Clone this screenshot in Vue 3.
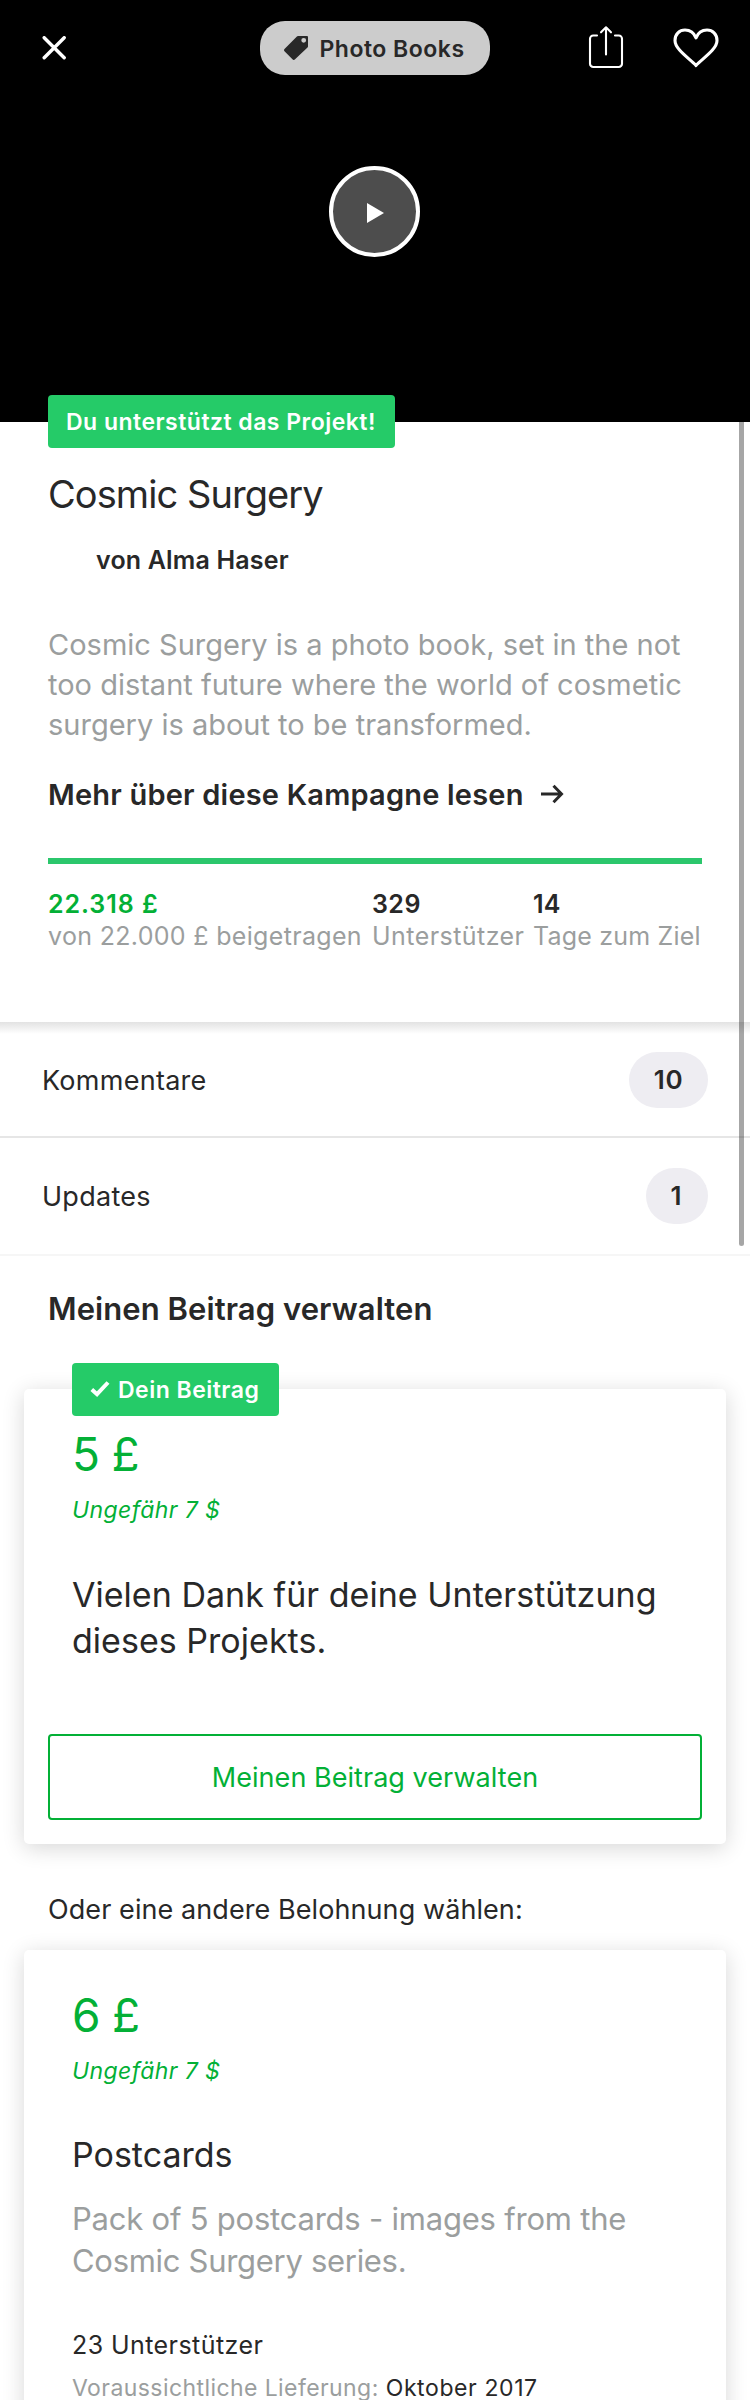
<script setup>
const stats = [
  { value: '22.318 £', label: 'von 22.000 £ beigetragen', cls: 'raised' },
  { value: '329', label: 'Unterstützer', cls: 'backers' },
  { value: '14', label: 'Tage zum Ziel', cls: 'days' },
]
</script>

<template>
  <div class="screen">
    <header class="hero">
      <div class="topbar">
        <svg class="close" width="24" height="24" viewBox="0 0 24 24"><path d="M2.200 1.700 22.200 21.700M22.200 1.700 2.200 21.700" /></svg>
        <div class="category">
          <svg width="24" height="24" viewBox="0 0 24 24">
            <path fill="#282828" fill-rule="evenodd" d="M14 0H23a1 1 0 0 1 1 1v9.500a1.500 1.500 0 0 1-.5 1.100L10.800 23.500a1.500 1.500 0 0 1-2.100 0L.5 15.200a1.500 1.500 0 0 1 0-2.100L12.900.5A1.500 1.500 0 0 1 14 0ZM19.700 1.900a2.400 2.400 0 1 0 0 4.800 2.400 2.400 0 0 0 0-4.800Z" />
          </svg>
          <span class="t-cat">Photo Books</span>
        </div>
        <svg class="share" width="36" height="44" viewBox="0 0 36 44"><path d="M9 10.500H5.200A3.200 3.200 0 0 0 2 13.700V38.800A3.200 3.200 0 0 0 5.200 42H30.800A3.200 3.200 0 0 0 34 38.800V13.700A3.200 3.200 0 0 0 30.800 10.500H27M18 29.500V2.500M13 7.300 18 2.300 23 7.300" /></svg>
        <svg class="heart" width="46" height="40" viewBox="0 0 46 40"><path d="M23 37.500C16.500 30.500 2 21.500 2 12.500 2 6 6.500 2 12 2 17 2 21 4.800 23 9.800 25 4.800 29 2 34 2 39.500 2 44 6 44 12.500 44 21.500 29.500 30.500 23 37.500Z" /></svg>
      </div>
      <div class="play"><svg width="18" height="20" viewBox="0 0 18 20"><path fill="#fff" d="M0 0 17 10 0 20Z" /></svg></div>
    </header>

    <section class="intro">
      <div class="ribbon"><span class="t-ribbon">Du unterstützt das Projekt!</span></div>
      <h1>Cosmic Surgery</h1>
      <div class="author"><span class="t-author">von Alma Haser</span></div>
      <p class="blurb">
        <span>Cosmic Surgery is a photo book, set in the not</span>
        <span>too distant future where the world of cosmetic</span>
        <span>surgery is about to be transformed.</span>
      </p>
      <div class="more">
        <span class="t-more">Mehr über diese Kampagne lesen</span>
        <svg width="24" height="20" viewBox="0 0 24 20"><path d="M1 10H21M13.500 1.800 21.500 10 13.500 18.200" /></svg>
      </div>
      <div class="bar"></div>
      <div class="stats">
        <div v-for="s in stats" :key="s.label" :class="['stat', s.cls]">
          <b>{{ s.value }}</b><span>{{ s.label }}</span>
        </div>
      </div>
    </section>

    <nav>
      <div class="row first"><span>Kommentare</span><b class="count ten">10</b></div>
      <div class="row second"><span>Updates</span><b class="count">1</b></div>
    </nav>

    <h2>Meinen Beitrag verwalten</h2>
    <article class="card pledge">
      <div class="ribbon mine">
        <svg width="20" height="16" viewBox="0 0 20 16"><path d="M1.800 8.500 7 13.200 18 1.500" /></svg>
        <span class="t-mine">Dein Beitrag</span>
      </div>
      <div class="price">5 £</div>
      <div class="approx">Ungefähr 7 $</div>
      <h3><span>Vielen Dank für deine Unterstützung</span><span>dieses Projekts.</span></h3>
      <button><span>Meinen Beitrag verwalten</span></button>
    </article>

    <div class="other"><span>Oder eine andere Belohnung wählen:</span></div>
    <article class="card reward">
      <div class="price">6 £</div>
      <div class="approx">Ungefähr 7 $</div>
      <h3><span>Postcards</span></h3>
      <p class="desc"><span>Pack of 5 postcards - images from the</span><span>Cosmic Surgery series.</span></p>
      <div class="backed">23 Unterstützer</div>
      <div class="delivery"><span class="when">Voraussichtliche Lieferung:</span><span class="month">Oktober 2017</span></div>
    </article>
    <div class="scrollbar"></div>
  </div>
</template>

<style>
body { margin: 0; background: #fff; }
</style>

<style scoped>
* { box-sizing: border-box; }
.screen { position: relative; width: 750px; height: 2400px; overflow: hidden; background: #fff; color: #282828; font-family: Inter, "Liberation Sans", sans-serif; white-space: nowrap; }
svg { display: block; flex: none; }
h1, h2, h3, p { margin: 0; font-weight: 400; }
b { font-weight: 600; }
.hero { height: 422px; background: #000; display: flex; flex-direction: column; align-items: center; }
.topbar { width: 750px; height: 96px; display: flex; align-items: center; padding-left: 42px; }
.topbar > svg path { fill: none; stroke: #fff; stroke-linecap: round; stroke-linejoin: round; }
.close path { stroke-width: 3.4; }
.category { width: 230px; height: 54px; margin-left: 194px; background: #ccc; border-radius: 25px; display: flex; align-items: center; padding-left: 24px; }
.t-cat { margin-left: 11.5px; padding-top: 1px; font-size: 23px; font-weight: 600; letter-spacing: .5px; }
.share { margin-left: 98px; margin-top: -2px; }
.share path { stroke-width: 2.1; }
.heart { margin-left: 49px; margin-top: -1px; }
.heart path { stroke-width: 3.1; }
.play { width: 91px; height: 91px; margin: 70px 1px 0 0; border: 4px solid #fff; border-radius: 50%; background: #4d4d4d; display: flex; align-items: center; justify-content: center; padding: 3px 0 0 3px; }
.intro { height: 600px; padding: 0 48px; display: flow-root; }
.ribbon { height: 53px; width: 347px; background: #25cb68; border-radius: 4px; color: #fff; display: flex; align-items: center; padding-left: 18px; font-size: 23px; font-weight: 600; margin-top: -27px; position: relative; }
.t-ribbon { letter-spacing: .48px; }
h1 { font-size: 38px; line-height: 60px; margin-top: 16px; letter-spacing: -.93px; }
.author { padding-left: 48px; margin-top: 20px; font-size: 25px; line-height: 32px; font-weight: 600; letter-spacing: .17px; }
.blurb { margin-top: 49px; font-size: 29px; line-height: 40px; color: #9b9e9e; }
.blurb span, h3 span, .desc span { display: block; width: max-content; }
.more { margin-top: 29px; display: flex; align-items: center; height: 40px; font-size: 29px; font-weight: 600; letter-spacing: .2px; }
.more svg { margin-left: 16px; }
.more path { fill: none; stroke: #282828; stroke-width: 3; }
.bar { height: 6px; margin-top: 44px; background: #2bc76c; }
.stats { display: flex; margin-top: 24px; }
.stat { display: flex; flex-direction: column; font-size: 25px; line-height: 32px; }
.stat span { color: #9b9e9e; }
.stat b, .stat span { width: max-content; }
.raised { width: 324px; }
.raised b { color: #03b036; letter-spacing: .95px; }
.raised span { letter-spacing: .32px; }
.backers { width: 161px; letter-spacing: .45px; }
.days { width: 160px; letter-spacing: .2px; }
.row { display: flex; justify-content: space-between; align-items: center; padding: 0 42px; font-size: 27px; letter-spacing: .28px; }
.first { height: 116px; padding-top: 2px; border-bottom: 2px solid #e6e6e6; background: linear-gradient(#e2e2e2, #fff 12px); }
.second { height: 118px; border-bottom: 2px solid #f6f6f6; }
.count { height: 56px; width: 62px; border-radius: 28px; background: #eeedf2; font-size: 26px; line-height: 56px; text-align: center; letter-spacing: 0; padding-right: 2px; }
.ten { width: 79px; letter-spacing: .8px; padding-right: 0; }
h2 { font-size: 31px; line-height: 40px; font-weight: 600; margin: 33px 0 60px 48px; width: max-content; letter-spacing: .07px; }
.card { margin: 0 24px; border-radius: 5px; background: #fff; box-shadow: 0 4px 22px rgba(0, 0, 0, .16); padding: 0 24px; }
.pledge { height: 455px; }
.mine { width: 207px; margin: 0 0 0 24px; top: -26px; margin-bottom: -26px; }
.mine svg { margin-top: -2px; }
.mine path { fill: none; stroke: #fff; stroke-width: 4; }
.t-mine { margin-left: 8px; letter-spacing: .48px; }
.price { font-size: 46px; line-height: 60px; color: #03b036; padding-left: 24px; word-spacing: -1.5px; }
.approx { margin-top: 11px; font-size: 23px; line-height: 30px; font-style: italic; color: #03b036; padding-left: 24px; letter-spacing: .4px; }
h3 { margin-top: 46px; font-size: 34px; line-height: 46px; padding-left: 24px; }
.pledge h3 { letter-spacing: .03px; padding-top: 1px; margin-bottom: -1px; }
button { display: block; width: 654px; height: 86px; margin-top: 71px; padding: 0; border: 2px solid #03b036; border-radius: 4px; background: #fff; color: #03b036; font: 400 27px/84px Inter, sans-serif; letter-spacing: .04px; text-align: center; }
.pledge h3 + button { margin-top: 72px; }
.pledge h3 { margin-bottom: -2px; }
.pledge .price { margin-top: 8px; }
.other { height: 106px; padding: 47px 0 0 48px; font-size: 27px; line-height: 38px; letter-spacing: .08px; }
.reward { height: 520px; padding-top: 35px; }
.desc { margin-top: 20px; padding-left: 24px; font-size: 31px; line-height: 42px; color: #9b9e9e; letter-spacing: -.22px; }
.desc span + span { letter-spacing: -.3px; }
.backed { margin: 47px 0 0 24px; font-size: 25px; line-height: 32px; width: max-content; letter-spacing: .43px; }
.delivery { margin: 13px 0 0 24px; display: flex; gap: 7px; font-size: 23px; line-height: 28px; letter-spacing: .42px; }
.when { color: #9b9e9e; }
.month { letter-spacing: .6px; }
.scrollbar { position: absolute; left: 739px; top: 422px; width: 5px; height: 824px; background: rgba(0, 0, 0, .35); border-radius: 0 0 3px 3px; }
</style>
